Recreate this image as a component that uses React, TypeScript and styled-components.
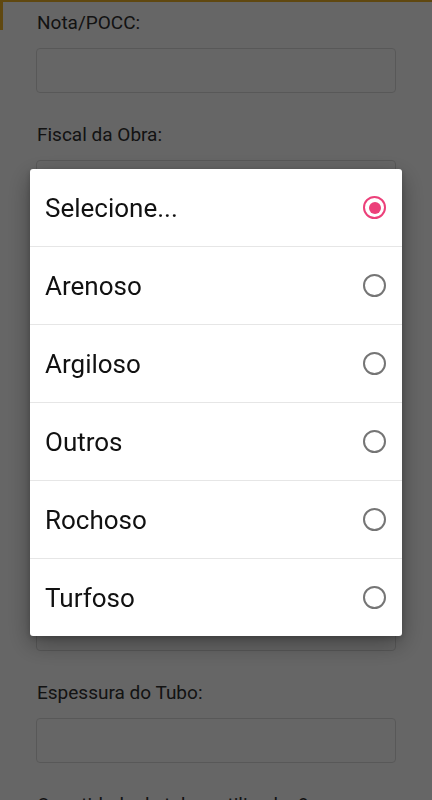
import styled, { createGlobalStyle } from "styled-components";
import { useState } from "react";

const GlobalStyle = createGlobalStyle`
  html, body {
    margin: 0;
    padding: 0;
    background: #ffffff;
    font-family: Roboto, "Liberation Sans", sans-serif;
  }
  * {
    box-sizing: border-box;
  }
`;

const fields = [
  { label: "Nota/POCC:" },
  { label: "Fiscal da Obra:" },
  { label: "Data da Execução:" },
  { label: "Endereço:" },
  { label: "Diâmetro do Tubo:" },
  { label: "Tipo de Solo:", value: "Selecione..." },
  { label: "Espessura do Tubo:" },
  { label: "Quantidade de tubos utilizados?" },
];

const options = ["Selecione...", "Arenoso", "Argiloso", "Outros", "Rochoso", "Turfoso"];

export default function App() {
  const [selected, setSelected] = useState(0);

  return (
    <>
      <GlobalStyle />
      <Page>
        {fields.map((f) => (
          <Field key={f.label}>
            <Label>{f.label}</Label>
            <Input>{f.value}</Input>
          </Field>
        ))}
      </Page>
      <Backdrop>
        <Dialog>
          {options.map((opt, i) => (
            <Option key={opt} $last={i === options.length - 1} onClick={() => setSelected(i)}>
              <OptionText>{opt}</OptionText>
              <Radio $checked={i === selected}>{i === selected && <Dot />}</Radio>
            </Option>
          ))}
        </Dialog>
      </Backdrop>
    </>
  );
}

const Page = styled.div`
  height: 100vh;
  overflow: hidden;
  padding: 12px 36px 0 36px;
  background:
    linear-gradient(#f0b429, #f0b429) 0 0 / 100% 2px no-repeat,
    linear-gradient(#f0b429, #f0b429) 0 0 / 3px 30px no-repeat,
    #ffffff;
`;

const Field = styled.div`
  display: flex;
  flex-direction: column;
  gap: 14px;
  margin-bottom: 30.67px;
`;

const Label = styled.div`
  font-size: 19px;
  line-height: 22px;
  color: #303030;
  padding-left: 1px;
`;

const Input = styled.div`
  height: 45px;
  border: 1px solid #dcdcdc;
  border-radius: 4px;
  background: #ffffff;
  display: flex;
  align-items: center;
  padding-left: 22px;
  font-size: 19px;
  color: #444;
`;

const Backdrop = styled.div`
  position: fixed;
  inset: 0;
  padding-top: 5px;
  background: rgba(0, 0, 0, 0.6);
  display: flex;
  align-items: center;
  justify-content: center;
`;

const Dialog = styled.div`
  width: 372px;
  background: #ffffff;
  border-radius: 3px;
  box-shadow: 0 8px 24px rgba(0, 0, 0, 0.35), 0 2px 6px rgba(0, 0, 0, 0.2);
  display: flex;
  flex-direction: column;
`;

const Option = styled.div<{ $last: boolean }>`
  height: ${(p) => (p.$last ? "77px" : "78px")};
  display: flex;
  align-items: center;
  justify-content: space-between;
  padding: 0 16px 0 15px;
  border-bottom: ${(p) => (p.$last ? "none" : "1px solid #e6e6e6")};
  cursor: pointer;
`;

const OptionText = styled.span`
  font-size: 26px;
  color: #111111;
`;

const Radio = styled.span<{ $checked: boolean }>`
  width: 23px;
  height: 23px;
  border-radius: 50%;
  border: 2px solid ${(p) => (p.$checked ? "#ec407a" : "#757575")};
  display: flex;
  align-items: center;
  justify-content: center;
`;

const Dot = styled.span`
  width: 12px;
  height: 12px;
  border-radius: 50%;
  background: #ec407a;
`;
